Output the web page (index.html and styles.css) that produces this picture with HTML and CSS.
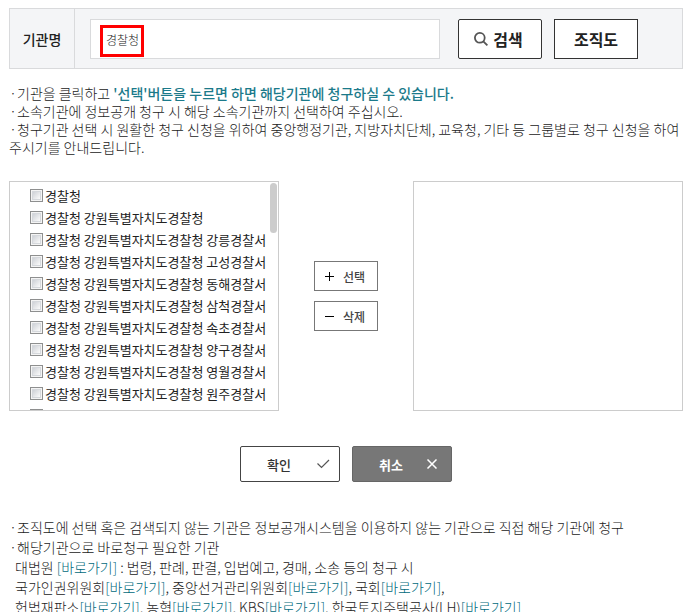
FILE: index.html
```html
<!DOCTYPE html>
<html lang="ko">
<head>
<meta charset="utf-8">
<title>기관 검색</title>
<link rel="stylesheet" href="styles.css">
</head>
<body>
<main class="page">
  <form class="search">
    <label class="search-label" for="org">기관명</label>
    <div class="search-body">
      <div class="field">
        <input class="field-input" id="org" type="text" value="경찰청">
        <span class="field-mark"></span>
      </div>
      <button class="btn-search find" type="button">
        <svg width="14" height="14" viewBox="0 0 14 14" fill="none" stroke="#555" stroke-width="1.8"><circle cx="5.8" cy="5.8" r="4.9"/><path d="M9.3 9.3L13.4 13.4"/></svg>
        검색
      </button>
      <button class="btn-search" type="button">조직도</button>
    </div>
  </form>

  <div class="guide">
    <p><span class="dot">·</span>기관을 클릭하고 <strong>'선택'버튼을 누르면 하면 해당기관에 청구하실 수 있습니다.</strong></p>
    <p><span class="dot">·</span>소속기관에 정보공개 청구 시 해당 소속기관까지 선택하여 주십시오.</p>
    <p><span class="dot">·</span>청구기관 선택 시 원활한 청구 신청을 위하여 중앙행정기관, 지방자치단체, 교육청, 기타 등 그룹별로 청구 신청을 하여 주시기를 안내드립니다.</p>
  </div>

  <div class="picker">
    <div class="panel">
      <ul class="orgs">
        <li><label><input type="checkbox">경찰청</label></li>
        <li><label><input type="checkbox">경찰청 강원특별자치도경찰청</label></li>
        <li><label><input type="checkbox">경찰청 강원특별자치도경찰청 강릉경찰서</label></li>
        <li><label><input type="checkbox">경찰청 강원특별자치도경찰청 고성경찰서</label></li>
        <li><label><input type="checkbox">경찰청 강원특별자치도경찰청 동해경찰서</label></li>
        <li><label><input type="checkbox">경찰청 강원특별자치도경찰청 삼척경찰서</label></li>
        <li><label><input type="checkbox">경찰청 강원특별자치도경찰청 속초경찰서</label></li>
        <li><label><input type="checkbox">경찰청 강원특별자치도경찰청 양구경찰서</label></li>
        <li><label><input type="checkbox">경찰청 강원특별자치도경찰청 영월경찰서</label></li>
        <li><label><input type="checkbox">경찰청 강원특별자치도경찰청 원주경찰서</label></li>
        <li><label><input type="checkbox" aria-label="다음 기관"></label></li>
      </ul>
      <span class="thumb"></span>
    </div>
    <div class="moves">
      <button class="btn-move" type="button">
        <svg width="9" height="9" viewBox="0 0 9 9" fill="#000"><path d="M4 0h1v4h4v1H5v4H4V5H0V4h4z"/></svg>
        선택
      </button>
      <button class="btn-move" type="button">
        <svg width="9" height="9" viewBox="0 0 9 9" fill="#000"><path d="M0 4h9v1H0z"/></svg>
        삭제
      </button>
    </div>
    <div class="panel"></div>
  </div>

  <div class="actions">
    <button class="btn-action" type="button">
      확인
      <svg width="14" height="10" viewBox="0 0 14 10" fill="none" stroke="#555" stroke-width="1.2"><path d="M1.5 4.5L5.5 8.5L13 1"/></svg>
    </button>
    <button class="btn-action cancel" type="button">
      취소
      <svg width="12" height="10" viewBox="0 0 12 10" fill="none" stroke="#fff" stroke-width="1.5"><path d="M1.5 .5l9 9M10.5 .5l-9 9"/></svg>
    </button>
  </div>

  <div class="notes">
    <p><span class="dot">·</span>조직도에 선택 혹은 검색되지 않는 기관은 정보공개시스템을 이용하지 않는 기관으로 직접 해당 기관에 청구</p>
    <p><span class="dot">·</span>해당기관으로 바로청구 필요한 기관</p>
    <p class="sub">대법원 <a href="#">[바로가기]</a> : 법령, 판례, 판결, 입법예고, 경매, 소송 등의 청구 시</p>
    <p class="sub">국가인권위원회<a href="#">[바로가기]</a>, 중앙선거관리위원회<a href="#">[바로가기]</a>, 국회<a href="#">[바로가기]</a>,</p>
    <p class="sub">헌법재판소<a href="#">[바로가기]</a>, 농협<a href="#">[바로가기]</a>, KBS<a href="#">[바로가기]</a>, 한국토지주택공사(LH)<a href="#">[바로가기]</a></p>
  </div>
</main>
</body>
</html>
```
FILE: styles.css
```css
* { box-sizing: border-box; }
body {
  margin: 0;
  background: #fff;
  color: #222;
  font-family: "Noto Sans CJK KR", "Noto Sans", sans-serif;
  font-size: 14px;
  font-weight: 300;
  /* the localized Korean space is too wide for this text */
  font-feature-settings: "locl" 0;
}
p, ul { margin: 0; padding: 0; }
button, input { font-family: inherit; margin: 0; }
button { padding: 0; cursor: pointer; background: #fff; }
.page { padding: 8px 11px 0 9px; }

.search {
  display: flex;
  border: 1px solid #d9dadc;
  background: #f4f5f7;
}
.search-label {
  display: flex;
  align-items: center;
  justify-content: center;
  width: 65px;
  border-right: 1px solid #d9dadc;
  color: #222;
  font-weight: 500;
}
.search-body {
  flex: 1;
  display: flex;
  align-items: center;
  gap: 12px;
  padding: 10px 44px 9px 15px;
}
.field { position: relative; flex: 1; margin-right: 6px; }
.field-input {
  display: block;
  width: 100%;
  height: 40px;
  padding: 0 15px;
  border: 1px solid #d9dadc;
  border-radius: 0;
  background: #fff;
  color: #222;
  font-size: 12px;
  font-weight: 300;
}
.field-mark {
  position: absolute;
  left: 10px;
  top: 6px;
  width: 44px;
  height: 32px;
  border: 3px solid #f00;
}
.btn-search {
  display: flex;
  align-items: center;
  justify-content: center;
  gap: 5px;
  width: 84px;
  height: 40px;
  border: 1px solid #333;
  color: #222;
  font-size: 16px;
  font-weight: 700;
}
.find { padding-right: 3px; border-radius: 2px; }

.guide { margin-top: 15px; line-height: 18px; }
.guide strong { color: #1b7a8a; font-weight: 500; }
.dot { display: inline-block; width: 8px; text-align: center; }

.picker {
  display: grid;
  grid-template-columns: 1fr 134px 1fr;
  margin-top: 25px;
}
.panel {
  position: relative;
  height: 230px;
  overflow: hidden;
  border: 1px solid #ccc;
}
.orgs { list-style: none; padding: 2px 0 0 20px; }
.orgs li { height: 22px; }
.orgs label {
  display: flex;
  align-items: center;
  gap: 2px;
  height: 22px;
  color: #222;
  font-size: 13px;
  font-weight: 400;
  white-space: nowrap;
}
.orgs input {
  appearance: none;
  flex: none;
  width: 13px;
  height: 13px;
  margin: 0;
  border: 1px solid #8e8f8f;
  background: linear-gradient(135deg, #d0d3d8 20%, #fafafa 80%);
  box-shadow: inset 0 0 0 1px #f4f4f4, inset 0 0 0 2px #d5d8dc;
}
.thumb {
  position: absolute;
  top: 1px;
  right: 1px;
  width: 7px;
  height: 50px;
  border-radius: 4px;
  background: #ccc;
}
.moves {
  display: flex;
  flex-direction: column;
  align-items: center;
  justify-content: center;
  gap: 10px;
}
.btn-move {
  display: flex;
  align-items: center;
  gap: 9px;
  width: 64px;
  height: 30px;
  padding-left: 10px;
  border: 1px solid #777;
  color: #444;
  font-size: 12px;
  font-weight: 500;
}

.actions {
  display: flex;
  justify-content: center;
  gap: 12px;
  margin-top: 35px;
}
.btn-action {
  display: flex;
  align-items: center;
  justify-content: space-between;
  width: 100px;
  height: 36px;
  padding: 0 9px 0 26px;
  border: 1px solid #444;
  border-radius: 2px;
  color: #333;
  font-size: 13px;
  font-weight: 500;
}
.cancel {
  padding-right: 13px;
  border-color: #666;
  background: #777;
  color: #fff;
  font-weight: 700;
}

.notes { margin-top: 35px; line-height: 20px; }
.notes .sub { padding-left: 6px; }
.notes a { color: #006a7c; text-decoration: none; }
```
